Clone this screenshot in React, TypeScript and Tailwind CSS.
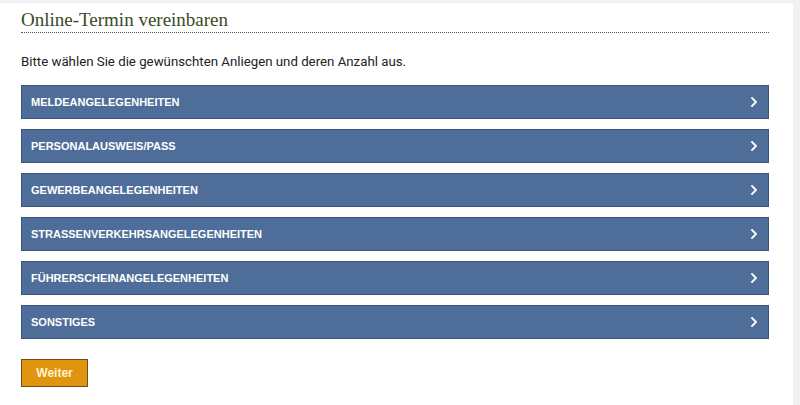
import { ChevronRight } from "lucide-react";

const categories = [
  "Meldeangelegenheiten",
  "Personalausweis/Pass",
  "Gewerbeangelegenheiten",
  "Strassenverkehrsangelegenheiten",
  "Führerscheinangelegenheiten",
  "Sonstiges",
];

export default function App() {
  return (
    <div className="h-[405px] w-[800px] overflow-hidden bg-[#f1f1f1] pt-[3px] pr-[7px]">
      <div className="h-full bg-white px-[21px] pr-[24px] pt-[7px]">
        <h2 className="border-b border-dotted border-[#555] pb-[2px] text-[19px] leading-[20px] text-[#3a4a26] [font-family:'Liberation_Serif',serif]">
          Online-Termin vereinbaren
        </h2>

        <p className="mt-[20px] text-[13.25px] leading-[18px] text-[#222] [font-family:Roboto,sans-serif]">
          Bitte wählen Sie die gewünschten Anliegen und deren Anzahl aus.
        </p>

        <div className="mt-[14px] flex flex-col gap-[10px]">
          {categories.map((c) => (
            <button
              key={c}
              type="button"
              className="flex h-[34px] items-center justify-between border border-[#3b5479] bg-[#4f6d99] pl-[9px] pr-[6px] text-left"
            >
              <span className="text-[11px] font-bold uppercase text-white [font-family:'Liberation_Sans',Arial,sans-serif]">
                {c}
              </span>
              <ChevronRight className="h-[16px] w-[16px] text-white" strokeWidth={2.75} />
            </button>
          ))}
        </div>

        <button
          type="button"
          className="mt-[20px] h-[28px] w-[67px] border border-[#6b4f1c] bg-[#df950f] text-[12px] font-bold text-[#fff4cc] [font-family:'Liberation_Sans',Arial,sans-serif]"
        >
          Weiter
        </button>
      </div>
    </div>
  );
}
